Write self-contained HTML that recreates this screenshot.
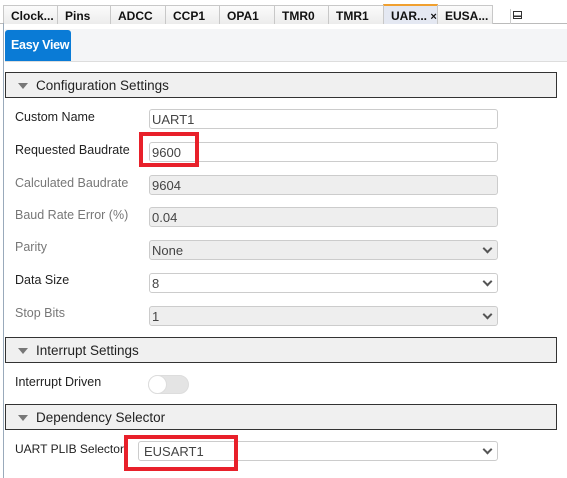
<!DOCTYPE html>
<html><head><style>
*{box-sizing:border-box;margin:0;padding:0}
body{width:567px;height:478px;background:#fff;position:relative;overflow:hidden;font-family:"Liberation Sans",sans-serif;font-size:13px;color:#222}
.a{position:absolute}
.tab{position:absolute;top:5px;height:19px;border:1px solid #c8c8c8;border-bottom:none;background:linear-gradient(#fbfbfb,#ececec);font-weight:bold;font-size:12px;padding:3px 0 0 7px;color:#111;white-space:nowrap}
.hdr{position:absolute;left:5px;width:552px;height:26px;background:#f0f0f0;border:1px solid #333;padding:5px 0 0 30px;font-size:13.5px;color:#222}
.hdr:before{content:"";position:absolute;left:12px;top:10px;border-left:5px solid transparent;border-right:5px solid transparent;border-top:6px solid #777}
.lbl{position:absolute;left:15px;font-size:12.5px;white-space:nowrap}
.dis{color:#777}
.in{position:absolute;left:149px;width:349px;height:20px;border:1px solid #ccc;border-radius:3px;padding:2px 0 0 2px;font-size:13px;color:#444;background:#fff}
.g{background:#eee}
.sel:after{content:"";position:absolute;right:6px;top:4px;width:5px;height:5px;border-right:2px solid #555;border-bottom:2px solid #555;transform:rotate(45deg)}
.red{position:absolute;border:4px solid #e8202a}
</style></head><body>
<div class="a" style="left:0;top:23px;width:567px;height:1px;background:#bbb"></div>
<div class="tab" style="left:3px;width:55px">Clock...</div>
<div class="tab" style="left:57px;width:54px">Pins</div>
<div class="tab" style="left:110px;width:56px">ADCC</div>
<div class="tab" style="left:165px;width:55px">CCP1</div>
<div class="tab" style="left:219px;width:56px">OPA1</div>
<div class="tab" style="left:274px;width:55px">TMR0</div>
<div class="tab" style="left:328px;width:56px">TMR1</div>
<div class="tab" style="left:383px;width:55px;background:#e4e8f2;border-top:2px solid #f0a030;height:20px;top:4px">UAR... <span style="font-size:11px">×</span></div>
<div class="tab" style="left:437px;width:56px">EUSA...</div>
<div class="a" style="left:510px;top:9px;width:1px;height:15px;background:#ccc"></div>
<div class="a" style="left:513px;top:11px;width:9px;height:8px;border:1px solid #333;background:linear-gradient(#fff 55%,#333 55%,#333 80%,#fff 80%)"></div>
<div class="a" style="left:3px;top:23px;width:1px;height:455px;background:#9ab"></div>
<div class="a" style="left:5px;top:29px;width:562px;height:33px;background:#f4f5f7;border-bottom:1px solid #ddd"></div>
<div class="a" style="left:5px;top:30px;width:66px;height:31px;background:#0a7bd6;color:#fff;font-weight:bold;font-size:12.5px;padding:8px 0 0 6px;border-radius:3px 3px 0 0;white-space:nowrap;letter-spacing:-0.3px">Easy View</div>
<div class="hdr" style="top:72px">Configuration Settings</div>
<div class="lbl" style="top:110px">Custom Name</div><div class="in" style="top:109px">UART1</div>
<div class="lbl" style="top:143px">Requested Baudrate</div><div class="in" style="top:142px">9600</div>
<div class="red" style="left:139px;top:132px;width:60px;height:35px"></div>
<div class="lbl dis" style="top:176px">Calculated Baudrate</div><div class="in g" style="top:175px">9604</div>
<div class="lbl dis" style="top:208px">Baud Rate Error (%)</div><div class="in g" style="top:207px">0.04</div>
<div class="lbl dis" style="top:240px">Parity</div><div class="in g sel" style="top:240px">None</div>
<div class="lbl" style="top:273px">Data Size</div><div class="in sel" style="top:273px">8</div>
<div class="lbl dis" style="top:306px">Stop Bits</div><div class="in g sel" style="top:306px">1</div>
<div class="hdr" style="top:337px">Interrupt Settings</div>
<div class="lbl" style="top:375px">Interrupt Driven</div>
<div class="a" style="left:148px;top:375px;width:41px;height:19px;border-radius:10px;background:#e4e4e4;border:1px solid #ddd"><div class="a" style="left:-1px;top:-1px;width:19px;height:19px;border-radius:50%;background:#fff;border:1px solid #ddd"></div></div>
<div class="hdr" style="top:404px">Dependency Selector</div>
<div class="lbl" style="top:442px;font-size:12px">UART PLIB Selector</div><div class="in sel" style="left:138px;width:360px;top:441px;padding-left:5px">EUSART1</div>
<div class="red" style="left:124px;top:435px;width:114px;height:36px"></div>
</body></html>
